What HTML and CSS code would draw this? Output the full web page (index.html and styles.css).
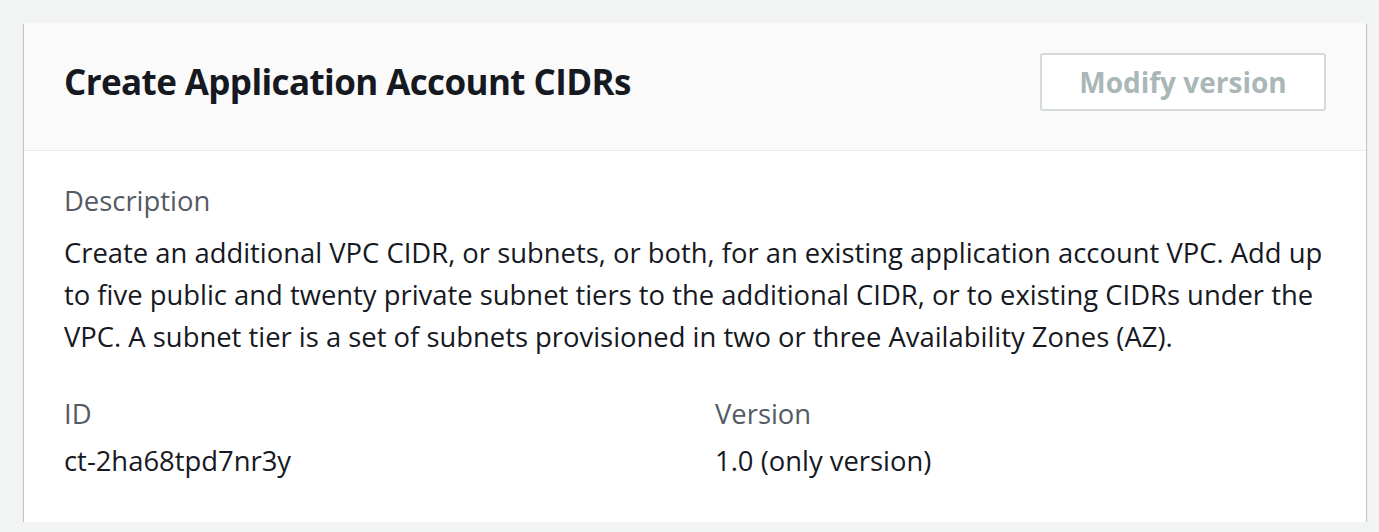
FILE: index.html
```html
<!DOCTYPE html>
<html lang="en">
<head>
<meta charset="utf-8">
<title>Create Application Account CIDRs</title>
<link rel="stylesheet" href="styles.css">
</head>
<body>
<section class="card">
  <header class="card-header">
    <h2 class="card-title">Create Application Account CIDRs</h2>
    <button class="btn" disabled>Modify version</button>
  </header>
  <div class="card-body">
    <div class="field desc">
      <div class="label">Description</div>
      <p class="value">Create an additional VPC CIDR, or subnets, or both, for an existing application account VPC. Add up to five public and twenty private subnet tiers to the additional CIDR, or to existing CIDRs under the VPC. A subnet tier is a set of subnets provisioned in two or three Availability Zones (AZ).</p>
    </div>
    <div class="grid">
      <div class="field">
        <div class="label">ID</div>
        <div class="value small-gap">ct-2ha68tpd7nr3y</div>
      </div>
      <div class="field">
        <div class="label">Version</div>
        <div class="value small-gap">1.0 (only version)</div>
      </div>
    </div>
  </div>
</section>
</body>
</html>
```

FILE: styles.css
```css
* { box-sizing: border-box; }
html, body { margin: 0; padding: 0; }
body {
  background: #f2f3f3;
  font-family: "Open Sans", "Noto Sans", sans-serif;
  color: #16191f;
  padding: 23px 13px 0 24px;
}
.card {
  background: #fff;
  width: 1342px;
  box-shadow: 0 1px 1px 0 rgba(0, 28, 36, 0.3), 1px 1px 1px 0 rgba(0, 28, 36, 0.15), -1px 1px 1px 0 rgba(0, 28, 36, 0.15);
}
.card-header {
  background: #fafafa;
  border-bottom: 1px solid #eaeded;
  padding: 30px 40px 39px 40px;
  display: flex;
  align-items: center;
  justify-content: space-between;
}
.card-title {
  margin: 0;
  font-size: 35px;
  line-height: 50px;
  letter-spacing: -0.6px;
  font-weight: 700;
  color: #16191f;
}
.btn {
  width: 286px;
  height: 58px;
  background: #fff;
  border: 2px solid #d5dbdb;
  border-radius: 3px;
  font-family: inherit;
  font-size: 28px;
  font-weight: 700;
  color: #aab7b8;
  padding: 0;
}
.card-body {
  padding: 29px 40px 40px 40px;
  font-size: 27.4px;
  line-height: 42px;
}
.label { color: #545b64; }
.value { margin: 0; color: #16191f; }
.desc .value { margin-top: 10px; }
.small-gap { margin-top: 5px; }
.grid {
  margin-top: 35px;
  display: grid;
  grid-template-columns: 1fr 1fr;
  column-gap: 40px;
}
```
